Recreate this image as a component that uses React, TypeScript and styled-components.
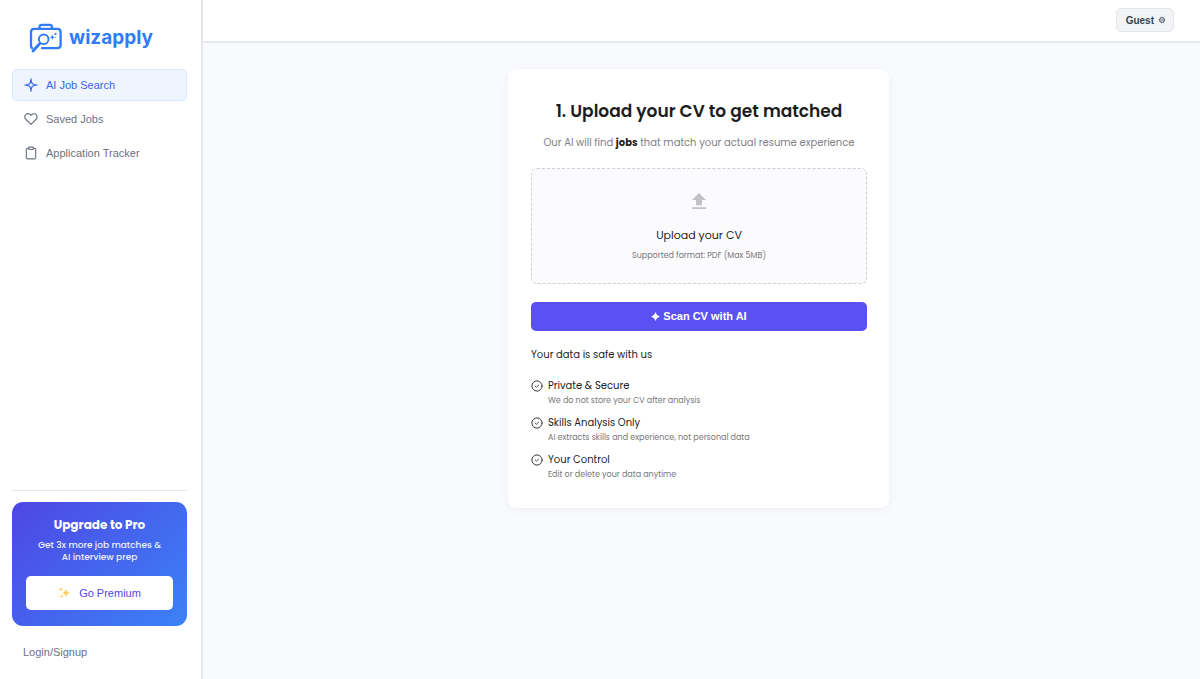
import React from "react";
import styled, { createGlobalStyle } from "styled-components";

const display = `Poppins, Inter, "Liberation Sans", sans-serif`;
const ui = `"Liberation Sans", Arial, sans-serif`;

const GlobalStyle = createGlobalStyle`
  *, *::before, *::after { box-sizing: border-box; }
  body { margin: 0; background: #f9fafc; font-family: ${ui}; }
  h1, h2, p, ul { margin: 0; padding: 0; }
  ul { list-style: none; }
  button { font: inherit; cursor: pointer; }
`;

const Shell = styled.div`
  display: flex;
  min-height: 100vh;
`;

const Sidebar = styled.aside`
  display: flex;
  flex-direction: column;
  flex: 0 0 203px;
  padding: 22px 14px 19px 12px;
  background: #fff;
  border-right: 2px solid #e5e7eb;
`;

const Brand = styled.a`
  display: flex;
  align-items: center;
  gap: 6px;
  height: 32px;
  margin: 0 0 15px 17px;
  color: #307bf8;
  text-decoration: none;
`;

const BrandName = styled.span`
  font: 700 19px/28px Inter, "Liberation Sans", sans-serif;
`;

const NavList = styled.ul`
  display: flex;
  flex-direction: column;
  gap: 2px;
`;

const NavLink = styled.a<{ $active?: boolean }>`
  display: flex;
  align-items: center;
  gap: 8px;
  height: 32px;
  padding: 0 11px;
  border: 1px solid ${(p) => (p.$active ? "#d9e8fd" : "transparent")};
  border-radius: 5px;
  background: ${(p) => (p.$active ? "#eff5ff" : "transparent")};
  color: ${(p) => (p.$active ? "#3a66e8" : "#6b7280")};
  font-size: 11px;
  text-decoration: none;

  svg { flex: none; }
`;

const SidebarFooter = styled.div`
  margin-top: auto;
  padding-top: 11px;
  border-top: 1px solid #e5e7eb;
`;

const Promo = styled.section`
  padding: 14px 14px 16px;
  border-radius: 11px;
  background: linear-gradient(135deg, #4f46e5, #3b82f6);
  color: #fff;
  text-align: center;
`;

const PromoTitle = styled.h2`
  font: 700 12px/18px ${display};
`;

const PromoText = styled.p`
  margin: 5px 0 13px;
  font: 500 9px/12px ${display};
  color: #eceffe;
`;

const PromoButton = styled.button`
  display: flex;
  align-items: center;
  justify-content: center;
  gap: 8px;
  width: 100%;
  height: 34px;
  padding: 0 0 1px;
  border: 0;
  border-radius: 5px;
  background: #fff;
  color: #4f46e5;
  font-size: 11px;
`;

const LoginLink = styled.a`
  display: block;
  margin: 18px 0 0 11px;
  color: #6b7280;
  font-size: 11px;
  line-height: 16px;
  text-decoration: none;
`;

const Content = styled.div`
  display: flex;
  flex: 1;
  flex-direction: column;
  min-width: 0;
`;

const TopBar = styled.header`
  display: flex;
  align-items: flex-start;
  justify-content: flex-end;
  height: 42px;
  padding: 8px 26px;
  border-bottom: 1px solid #e5e7eb;
  background: #fff;
  box-shadow: 0 1px 1px rgba(30, 40, 60, 0.06);
`;

const GuestButton = styled.button`
  display: flex;
  align-items: center;
  gap: 4px;
  height: 24px;
  padding: 0 7px 0 9px;
  border: 1px solid #e5e7eb;
  border-radius: 5px;
  background: #f3f4f6;
  color: #374151;
  font-size: 10px;
  font-weight: 700;
`;

const Main = styled.main`
  display: flex;
  justify-content: center;
  align-items: flex-start;
  padding: 27px 22px 27px 16px;
`;

const Card = styled.section`
  width: 100%;
  max-width: 381px;
  padding: 30px 22px 26px 23px;
  border-radius: 9px;
  background: #fff;
  box-shadow: 0 2px 10px rgba(30, 50, 90, 0.05);
`;

const Title = styled.h1`
  color: #1c1c1e;
  font: 600 17px/24px ${display};
  text-align: center;
`;

const Subtitle = styled.p`
  margin: 12px 0 17px;
  color: #808084;
  font: 400 10px/16px ${display};
  text-align: center;

  strong { color: #1c1c1e; font-weight: 700; }
`;

const DropZone = styled.label`
  display: flex;
  flex-direction: column;
  align-items: center;
  height: 116px;
  padding-top: 24px;
  border: 1px dashed #d0d0d4;
  border-radius: 6px;
  background: #fbfbfd;
  cursor: pointer;
`;

const FileInput = styled.input`
  width: 1px;
  height: 1px;
  opacity: 0;
  overflow: hidden;
`;

const DropTitle = styled.span`
  margin-top: 15px;
  color: #1c1c1e;
  font: 400 11px/18px ${display};
`;

const DropHint = styled.span`
  margin-top: 5px;
  color: #78787c;
  font: 400 8px/14px ${display};
`;

const ScanButton = styled.button`
  display: flex;
  align-items: center;
  justify-content: center;
  gap: 3px;
  width: 100%;
  height: 29px;
  margin: 18px 0 16px;
  padding: 0 0 1px;
  border: 0;
  border-radius: 5px;
  background: #5b51f3;
  color: #fff;
  font-size: 11px;
  font-weight: 700;
`;

const SafeHeading = styled.h2`
  color: #1c1c1e;
  font: 400 10px/16px ${display};
`;

const SafeList = styled.ul`
  display: flex;
  flex-direction: column;
  gap: 7px;
  margin-top: 15px;
`;

const SafeItem = styled.li`
  display: flex;
  gap: 5px;

  svg { flex: none; margin-top: 2px; }
`;

const SafeTitle = styled.p`
  color: #1c1c1e;
  font: 400 10px/15px ${display};
`;

const SafeText = styled.p`
  padding-top: 1px;
  color: #78787c;
  font: 400 8px/14px ${display};
`;

const BriefcaseLogo = () => (
  <svg width="34" height="32" viewBox="0 0 34 32" fill="none" stroke="currentColor" strokeWidth="2.3" strokeLinecap="round" strokeLinejoin="round" aria-hidden="true">
    <path d="M3 26Q2 25.2 2 23.5V10Q2 6.8 5.2 6.8H28.4Q31.6 6.8 31.6 10V23Q31.6 26.2 28.4 26.2H13" />
    <path d="M10.5 6.2V5.2Q10.5 2.9 13 2.9H20.5Q23 2.9 23 5.2V6.2" />
    <circle cx="14.7" cy="17.3" r="4.8" strokeWidth="1.9" />
    <path d="M10.6 21.7L4 29" strokeWidth="2.8" />
    <path d="M23.3 12.6l.8 1.8 1.8.8-1.8.8-.8 1.8-.8-1.8-1.8-.8 1.8-.8z" fill="currentColor" stroke="none" />
    <path d="M26.9 11.6l-.6.7" strokeWidth="1.7" />
    <path d="M26.6 15.2v.1" strokeWidth="1.1" />
  </svg>
);

const StarIcon = () => (
  <svg width="14" height="14" viewBox="0 0 14 14" fill="none" stroke="currentColor" strokeWidth="1.2" strokeLinejoin="round" strokeLinecap="round" aria-hidden="true">
    <path d="M7 2.4L8.3 5.7L11.6 7L8.3 8.3L7 11.6L5.7 8.3L2.4 7L5.7 5.7Z" />
    <path d="M7 .8v1.6M7 11.6v1.6M.8 7h1.6M11.6 7h1.6" />
  </svg>
);

const HeartIcon = () => (
  <svg width="14" height="14" viewBox="0 0 24 24" fill="none" stroke="currentColor" strokeWidth="1.9" strokeLinecap="round" strokeLinejoin="round" aria-hidden="true">
    <path d="M20.8 4.6a5.5 5.5 0 0 0-7.8 0L12 5.7l-1.1-1.1a5.5 5.5 0 0 0-7.8 7.8L12 21.2l8.8-8.8a5.5 5.5 0 0 0 0-7.8z" />
  </svg>
);

const ClipboardIcon = () => (
  <svg width="14" height="14" viewBox="0 0 24 24" fill="none" stroke="currentColor" strokeWidth="1.9" strokeLinecap="round" strokeLinejoin="round" aria-hidden="true">
    <path d="M16 4h2a2 2 0 0 1 2 2v14a2 2 0 0 1-2 2H6a2 2 0 0 1-2-2V6a2 2 0 0 1 2-2h2" />
    <rect x="8" y="2" width="8" height="4" rx="1" />
  </svg>
);

const SparklesIcon = () => (
  <svg width="13" height="13" viewBox="0 0 13 13" fill="#fbcf5b" aria-hidden="true">
    <path d="M8 2.4Q8.4 6.3 12.2 6.9Q8.4 7.5 8 11.4Q7.6 7.5 3.8 6.9Q7.6 6.3 8 2.4Z" />
    <path d="M2.9 1.3Q3.1 3.1 4.9 3.4Q3.1 3.7 2.9 5.5Q2.7 3.7.9 3.4Q2.7 3.1 2.9 1.3Z" />
    <path d="M3.7 8.4Q3.9 10.1 5.4 10.3Q3.9 10.5 3.7 12.2Q3.5 10.5 2 10.3Q3.5 10.1 3.7 8.4Z" />
  </svg>
);

const GearIcon = () => (
  <svg width="8" height="8" viewBox="0 0 8 8" fill="none" stroke="currentColor" aria-hidden="true">
    <circle cx="4" cy="4" r="2.3" strokeWidth=".9" />
    <circle cx="4" cy="4" r="2.9" strokeWidth=".6" strokeDasharray="1 1.2" />
    <path d="M2.5 4h3" strokeWidth=".7" />
  </svg>
);

const UploadIcon = () => (
  <svg width="14" height="17" viewBox="0 0 14 17" fill="#c2c2c6" aria-hidden="true">
    <path d="M7 0L14 7H10V12.3H4V7H0ZM0 14.2H14V16H0Z" />
  </svg>
);

const FourPointStar = () => (
  <svg width="9" height="9" viewBox="0 0 9 9" fill="currentColor" aria-hidden="true">
    <path d="M4.5 0Q5.5 3.5 9 4.5Q5.5 5.5 4.5 9Q3.5 5.5 0 4.5Q3.5 3.5 4.5 0Z" />
  </svg>
);

const CheckCircle = () => (
  <svg width="12" height="12" viewBox="0 0 12 12" fill="none" stroke="#3a3a3c" strokeLinecap="round" strokeLinejoin="round" aria-hidden="true">
    <circle cx="6" cy="6" r="5.1" strokeWidth="1" />
    <path d="M4.3 6.2l1.1 1 2.2-2.1" strokeWidth=".9" />
  </svg>
);

const navItems = [
  { label: "AI Job Search", icon: <StarIcon />, active: true },
  { label: "Saved Jobs", icon: <HeartIcon /> },
  { label: "Application Tracker", icon: <ClipboardIcon /> },
];

const promises = [
  { title: "Private & Secure", text: "We do not store your CV after analysis" },
  { title: "Skills Analysis Only", text: "AI extracts skills and experience, not personal data" },
  { title: "Your Control", text: "Edit or delete your data anytime" },
];

export default function App() {
  return (
    <>
      <GlobalStyle />
      <Shell>
        <Sidebar>
          <Brand href="#">
            <BriefcaseLogo />
            <BrandName>wizapply</BrandName>
          </Brand>
          <nav>
            <NavList>
              {navItems.map((item) => (
                <li key={item.label}>
                  <NavLink href="#" $active={item.active} aria-current={item.active ? "page" : undefined}>
                    {item.icon}
                    {item.label}
                  </NavLink>
                </li>
              ))}
            </NavList>
          </nav>
          <SidebarFooter>
            <Promo>
              <PromoTitle>Upgrade to Pro</PromoTitle>
              <PromoText>
                Get 3x more job matches &amp;
                <br />
                AI interview prep
              </PromoText>
              <PromoButton type="button">
                <SparklesIcon />
                Go Premium
              </PromoButton>
            </Promo>
            <LoginLink href="#">Login/Signup</LoginLink>
          </SidebarFooter>
        </Sidebar>
        <Content>
          <TopBar>
            <GuestButton type="button">
              Guest
              <GearIcon />
            </GuestButton>
          </TopBar>
          <Main>
            <Card>
              <Title>1. Upload your CV to get matched</Title>
              <Subtitle>
                Our AI will find <strong>jobs</strong> that match your actual resume experience
              </Subtitle>
              <DropZone htmlFor="cv-file">
                <UploadIcon />
                <FileInput id="cv-file" type="file" accept="application/pdf" />
                <DropTitle>Upload your CV</DropTitle>
                <DropHint>Supported format: PDF (Max 5MB)</DropHint>
              </DropZone>
              <ScanButton type="button">
                <FourPointStar />
                Scan CV with AI
              </ScanButton>
              <SafeHeading>Your data is safe with us</SafeHeading>
              <SafeList>
                {promises.map((item) => (
                  <SafeItem key={item.title}>
                    <CheckCircle />
                    <div>
                      <SafeTitle>{item.title}</SafeTitle>
                      <SafeText>{item.text}</SafeText>
                    </div>
                  </SafeItem>
                ))}
              </SafeList>
            </Card>
          </Main>
        </Content>
      </Shell>
    </>
  );
}
